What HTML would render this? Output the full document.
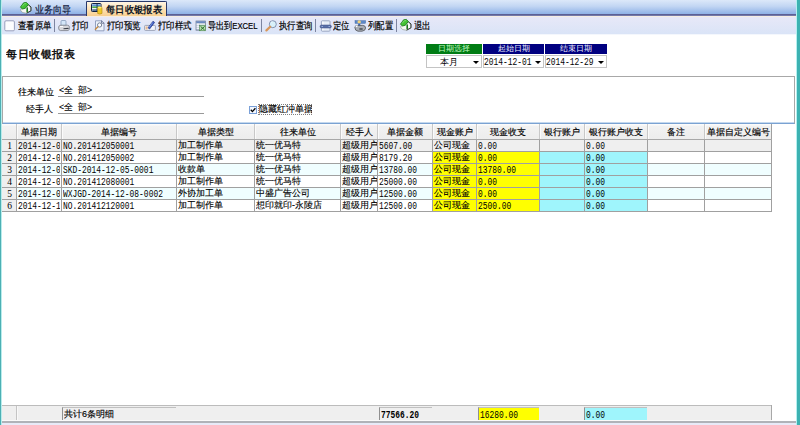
<!DOCTYPE html>
<html><head><meta charset="utf-8"><style>
*{margin:0;padding:0;box-sizing:border-box}
html,body{width:800px;height:425px;overflow:hidden;background:#fff;font-family:"Liberation Sans",sans-serif;color:#000}
.a{position:absolute}
.t{position:absolute;white-space:nowrap;overflow:hidden;line-height:11px}
.cn{font-size:9px}
.m{display:inline-block;font-family:"Liberation Mono",monospace;font-size:10.5px;line-height:11px;transform:scaleX(.755);transform-origin:0 0;position:relative;top:-2px}
.sx{display:inline-block;transform-origin:0 0}
</style></head><body>

<div class="a" style="left:0px;top:0px;width:1px;height:425px;background:#4cb0b4"></div>
<div class="a" style="left:1px;top:0px;width:1px;height:425px;background:#b8ecec"></div>
<div class="a" style="left:796px;top:0px;width:1px;height:425px;background:#b4f0f0"></div>
<div class="a" style="left:797px;top:0px;width:3px;height:425px;background:#3cb2b2"></div>
<div class="a" style="left:2px;top:0px;width:794px;height:14px;background:linear-gradient(#dce8f9,#c2d6f3 45%,#8eb1e6)"></div>
<div class="a" style="left:2px;top:14px;width:794px;height:1px;background:#5c6094"></div>
<div class="a" style="left:2px;top:15px;width:794px;height:1px;background:#7478a8"></div>
<div class="a" style="left:2px;top:16px;width:794px;height:1px;background:#f6ede2"></div>
<div class="a" style="left:2px;top:17px;width:794px;height:17px;background:linear-gradient(#e7e8f8,#dae4f7)"></div>
<div class="a" style="left:2px;top:34px;width:794px;height:1px;background:#f4f7fd"></div>
<div class="a" style="left:86px;top:1px;width:81px;height:15px;border:1px solid #27386a;border-bottom:none;border-radius:1px 2px 0 0;background:linear-gradient(#fff6e4,#fde2b6 50%,#f9cf90)"></div>
<svg class="a" style="left:18px;top:0px" width="16" height="16" viewBox="0 0 16 16">
<path d="M2.8 9 L5 8.6 L7.6 8 L10.2 5 L12.8 7.2 L12.8 10.8 L8.5 13.2 L4.8 12.6 L2.8 10.8 Z" fill="#f6f8f4" stroke="#8a948a" stroke-width="0.6"/>
<path d="M10.2 4.6 L13 7 L13 10.8 L8.6 13.2" fill="none" stroke="#303830" stroke-width="1"/>
<path d="M2.4 7.2 L5.6 2.8 L8.4 2.4 L10.4 4.4 L7.4 8.2 L4.6 9 Z" fill="#42c232" stroke="#187a18" stroke-width="0.8"/>
<path d="M4.2 6.4 L6.2 3.8 L8 3.6" fill="none" stroke="#8ae07a" stroke-width="0.8"/>
<path d="M8.4 8.2 L10 7 L10 11.8 L8.4 12.4 Z" fill="#1e7a1e"/>
</svg>
<div class="t" style="left:35px;top:4px;width:36px;font-size:9.6px;color:#14203c;-webkit-text-stroke:0.2px #14203c"><span class="sx" style="transform:scaleX(.9)">业务向导</span></div>
<svg class="a" style="left:88px;top:1px" width="16" height="16" viewBox="0 0 16 16">
<rect x="3.5" y="2.5" width="9.5" height="8" rx="0.8" fill="#e8f0f8" stroke="#102040" stroke-width="1"/>
<rect x="4.2" y="3.4" width="8" height="1.8" fill="#5c90d8"/>
<rect x="4.2" y="5.4" width="8" height="1.8" fill="#4aa848"/>
<rect x="4.2" y="7.4" width="8" height="0.8" fill="#fff"/>
<rect x="4.2" y="8.4" width="8" height="1.3" fill="#2a4a7a"/>
<rect x="8.6" y="3" width="0.9" height="7" fill="#1a3050"/>
<path d="M9.6 6.5 Q11.8 5 14 6.5 L14 12.4 Q11.8 13.8 9.6 12.4 Z" fill="#f0c828" stroke="#b08a10" stroke-width="0.6"/>
<ellipse cx="11.8" cy="6.6" rx="2" ry="0.8" fill="#fff07a"/>
</svg>
<div class="t" style="left:106px;top:4px;width:59px;font-size:9.5px;font-weight:bold;color:#0c1424"><span class="sx" style="transform:scaleX(.93)">每日收银报表</span></div>
<svg class="a" style="left:2px;top:17px" width="16" height="16" viewBox="0 0 16 16">
<rect x="2.8" y="3.8" width="9.6" height="10" rx="1.2" fill="#fdfdff" stroke="#8e96b6" stroke-width="0.9"/></svg>
<div class="t" style="left:18px;top:20px;width:34px;height:12px;font-size:9.5px;line-height:12px;color:#000;-webkit-text-stroke:0.2px #000"><span class="sx" style="transform:scaleX(0.84)">查看原单</span></div>
<div class="a" style="left:54px;top:19px;width:1px;height:13px;background:#7c84a0"></div>
<svg class="a" style="left:56px;top:17px" width="16" height="16" viewBox="0 0 16 16">
<path d="M5 8.5 L5 4.5 Q5 3.5 6 3.5 L9 3.5 Q10 3.5 10 4.5 L10 8.5 Z" fill="#d4e6f8" stroke="#7a90b0" stroke-width="0.7"/>
<path d="M2.6 10 Q3 8.2 5 8.2 L11.5 8.2 Q13.4 8.4 13.6 10.4 L13.2 12.4 Q12.8 13.6 11.2 13.6 L4.4 13.6 Q3 13.4 2.8 12 Z" fill="#d8d8dc" stroke="#6a6e78" stroke-width="0.7"/>
<path d="M4 9.6 L7 9.4" stroke="#fff" stroke-width="1"/>
<path d="M7.5 11.8 L12.6 11.4" stroke="#3a3e48" stroke-width="1.1"/>
</svg>
<div class="t" style="left:72px;top:20px;width:18px;height:12px;font-size:9.5px;line-height:12px;color:#000;-webkit-text-stroke:0.2px #000"><span class="sx" style="transform:scaleX(0.84)">打印</span></div>
<svg class="a" style="left:92px;top:17px" width="16" height="16" viewBox="0 0 16 16">
<path d="M3.5 3.8 L9.8 3.8 L12 6 L12 13.8 L3.5 13.8 Z" fill="#eef3fb" stroke="#7e8cb0" stroke-width="0.8"/>
<path d="M9.6 3.6 L9.6 6.2 L12.2 6.2" fill="none" stroke="#505c80" stroke-width="0.8"/>
<circle cx="7.6" cy="8" r="2.1" fill="#fff" stroke="#6a7690" stroke-width="0.9"/>
<path d="M6.2 9.6 L3 12.8" stroke="#c88a40" stroke-width="1.4"/>
</svg>
<div class="t" style="left:107px;top:20px;width:34px;height:12px;font-size:9.5px;line-height:12px;color:#000;-webkit-text-stroke:0.2px #000"><span class="sx" style="transform:scaleX(0.84)">打印预览</span></div>
<svg class="a" style="left:142px;top:17px" width="16" height="16" viewBox="0 0 16 16">
<rect x="2.6" y="8.4" width="10.8" height="5" rx="0.8" fill="#f2f4fa" stroke="#8a92aa" stroke-width="0.8"/>
<rect x="3.6" y="9.4" width="2" height="3" fill="#e8b890"/>
<path d="M6 10.8 L11 4.2 L12.6 5.4 L7.6 12 Z" fill="#3a5ac8" stroke="#1a2a70" stroke-width="0.6"/>
<path d="M7.2 10.2 L10.6 5.6" stroke="#a8c0f0" stroke-width="0.6"/>
</svg>
<div class="t" style="left:158px;top:20px;width:34px;height:12px;font-size:9.5px;line-height:12px;color:#000;-webkit-text-stroke:0.2px #000"><span class="sx" style="transform:scaleX(0.84)">打印样式</span></div>
<svg class="a" style="left:193px;top:17px" width="16" height="16" viewBox="0 0 16 16">
<rect x="3" y="4" width="9.4" height="9.2" fill="#b8c2d8" stroke="#6a7890" stroke-width="0.7"/>
<rect x="3.3" y="4.3" width="8.8" height="1.8" fill="#6a88c0"/>
<rect x="3.6" y="6.6" width="2.6" height="1.2" fill="#fff"/>
<rect x="3.6" y="8.6" width="2.6" height="1.2" fill="#fff"/>
<rect x="3.6" y="10.6" width="2.6" height="1.2" fill="#fff"/>
<rect x="6.6" y="6.6" width="5.4" height="1.2" fill="#e8f0e8"/>
<rect x="6.6" y="8.4" width="6" height="5.4" fill="#b8e0b0" stroke="#3a7a3a" stroke-width="0.5"/>
<path d="M7.6 9.4 L11.6 13 M11.6 9.4 L7.6 13" stroke="#2a6a2a" stroke-width="1"/>
</svg>
<div class="t" style="left:208px;top:20px;width:51px;height:12px;font-size:9.5px;line-height:12px;color:#000;-webkit-text-stroke:0.2px #000"><span class="sx" style="transform:scaleX(.81)">导出到EXCEL</span></div>
<div class="a" style="left:261px;top:19px;width:1px;height:13px;background:#7c84a0"></div>
<svg class="a" style="left:263px;top:17px" width="16" height="16" viewBox="0 0 16 16">
<circle cx="9.8" cy="7.2" r="3.5" fill="#d8f0fa" stroke="#7888a8" stroke-width="0.9"/>
<path d="M8 5.5 Q8.6 4.8 9.4 4.8" stroke="#fff" stroke-width="0.8" fill="none"/>
<path d="M7.2 9.8 L3.4 13.4" stroke="#d8965a" stroke-width="2.2" stroke-linecap="round"/>
</svg>
<div class="t" style="left:279px;top:20px;width:34px;height:12px;font-size:9.5px;line-height:12px;color:#000;-webkit-text-stroke:0.2px #000"><span class="sx" style="transform:scaleX(0.84)">执行查询</span></div>
<div class="a" style="left:315px;top:19px;width:1px;height:13px;background:#7c84a0"></div>
<svg class="a" style="left:318px;top:17px" width="16" height="16" viewBox="0 0 16 16">
<rect x="3.4" y="3.8" width="8.6" height="10.4" rx="0.8" fill="#e8eef8" stroke="#8a98b8" stroke-width="0.8"/>
<rect x="4.4" y="4.6" width="1" height="8.8" fill="#fff"/>
<rect x="2" y="8" width="11.4" height="3" rx="1.5" fill="#5a70a8" stroke="#3a4a80" stroke-width="0.5"/>
<path d="M3.5 9.5 H5 M10.5 9.5 H12" stroke="#a8c0e8" stroke-width="0.8"/>
</svg>
<div class="t" style="left:333px;top:20px;width:19px;height:12px;font-size:9.5px;line-height:12px;color:#000;-webkit-text-stroke:0.2px #000"><span class="sx" style="transform:scaleX(0.84)">定位</span></div>
<svg class="a" style="left:353px;top:17px" width="16" height="16" viewBox="0 0 16 16">
<rect x="2" y="3.6" width="10.6" height="2.8" fill="#5a88c8" stroke="#3a5a98" stroke-width="0.4"/>
<circle cx="6.2" cy="5" r="1.7" fill="#f2d27a"/>
<path d="M5.2 6.6 L7.2 6.6 L7.4 9.4 L5 9.4 Z" fill="#3a6ac0"/>
<path d="M1.8 10.4 Q2.4 7.8 5 8.4 L9.8 8.4 Q12.6 8.6 12.6 11 Q12.4 13.8 9 14.2 L5 14.2 Q2 13.8 1.8 10.4 Z" fill="#a8acb4" stroke="#50545c" stroke-width="0.8"/>
<path d="M3 10 Q3.4 8.8 4.6 9" stroke="#fff" stroke-width="1.3" fill="none"/>
<ellipse cx="8" cy="12" rx="2" ry="0.9" fill="#5a5e66"/>
</svg>
<div class="t" style="left:368px;top:20px;width:27px;height:12px;font-size:9.5px;line-height:12px;color:#000;-webkit-text-stroke:0.2px #000"><span class="sx" style="transform:scaleX(0.84)">列配置</span></div>
<div class="a" style="left:396px;top:19px;width:1px;height:13px;background:#7c84a0"></div>
<svg class="a" style="left:398px;top:17px" width="16" height="16" viewBox="0 0 16 16">
<path d="M2.8 9 L5 8.6 L7.6 8 L10.2 5 L12.8 7.2 L12.8 10.8 L8.5 13.2 L4.8 12.6 L2.8 10.8 Z" fill="#f6f8f4" stroke="#8a948a" stroke-width="0.6"/>
<path d="M10.2 4.6 L13 7 L13 10.8 L8.6 13.2" fill="none" stroke="#303830" stroke-width="1"/>
<path d="M2.4 7.2 L5.6 2.8 L8.4 2.4 L10.4 4.4 L7.4 8.2 L4.6 9 Z" fill="#42c232" stroke="#187a18" stroke-width="0.8"/>
<path d="M4.2 6.4 L6.2 3.8 L8 3.6" fill="none" stroke="#8ae07a" stroke-width="0.8"/>
<path d="M8.4 8.2 L10 7 L10 11.8 L8.4 12.4 Z" fill="#1e7a1e"/>
</svg>
<div class="t" style="left:414px;top:20px;width:19px;height:12px;font-size:9.5px;line-height:12px;color:#000;-webkit-text-stroke:0.2px #000"><span class="sx" style="transform:scaleX(0.84)">退出</span></div>
<div class="t" style="left:6px;top:47px;width:72px;font-size:11px;line-height:14px;letter-spacing:0.5px;-webkit-text-stroke:0.35px #000;color:#000">每日收银报表</div>
<div class="a" style="left:426px;top:44px;width:56px;height:10px;background:#007c14;color:#c4ffc4;font-size:8px;line-height:10px;text-align:center;white-space:nowrap">日期选择</div>
<div class="a" style="left:483px;top:44px;width:61px;height:10px;background:#000080;color:#f0f0ff;font-size:8px;line-height:10px;text-align:center;white-space:nowrap">起始日期</div>
<div class="a" style="left:545px;top:44px;width:62px;height:10px;background:#000080;color:#f0f0ff;font-size:8px;line-height:10px;text-align:center;white-space:nowrap">结束日期</div>
<div class="a" style="left:426px;top:55px;width:56px;height:13px;border:1px solid #c4c4c4;background:#fff"><div class="t" style="left:13px;top:1px;width:30px;font-size:9px">本月</div><div class="a" style="left:46px;top:5px;width:0;height:0;border-left:3px solid transparent;border-right:3px solid transparent;border-top:3px solid #000"></div></div>
<div class="a" style="left:483px;top:55px;width:61px;height:13px;border:1px solid #c4c4c4;background:#fff"><div class="t" style="left:0px;top:1px;height:11px"><span class="m" style="top:-3px">2014-12-01</span></div><div class="a" style="left:51px;top:5px;width:0;height:0;border-left:3px solid transparent;border-right:3px solid transparent;border-top:3px solid #000"></div></div>
<div class="a" style="left:545px;top:55px;width:62px;height:13px;border:1px solid #c4c4c4;background:#fff"><div class="t" style="left:0px;top:1px;height:11px"><span class="m" style="top:-3px">2014-12-29</span></div><div class="a" style="left:52px;top:5px;width:0;height:0;border-left:3px solid transparent;border-right:3px solid transparent;border-top:3px solid #000"></div></div>
<div class="a" style="left:2px;top:76px;width:793px;height:48px;border:1px solid #a8a8a8;border-bottom:1px solid #7aa2d2"></div>
<div class="a" style="left:3px;top:122px;width:791px;height:1px;background:#c4d8ee"></div>
<div class="t" style="left:18px;top:87px;width:37px;font-size:8.8px;-webkit-text-stroke:0.15px #000">往来单位</div>
<div class="t" style="left:59px;top:85px;width:36px;font-size:8.8px;-webkit-text-stroke:0.1px #000">&lt;全&nbsp;&nbsp;部&gt;</div>
<div class="a" style="left:58px;top:96px;width:146px;height:1px;background:#999"></div>
<div class="t" style="left:26px;top:104px;width:28px;font-size:8.8px;-webkit-text-stroke:0.15px #000">经手人</div>
<div class="t" style="left:59px;top:102px;width:36px;font-size:8.8px;-webkit-text-stroke:0.1px #000">&lt;全&nbsp;&nbsp;部&gt;</div>
<div class="a" style="left:58px;top:113px;width:146px;height:1px;background:#999"></div>
<div class="a" style="left:249px;top:106px;width:8px;height:8px;border:1px solid #7aa0d8;background:#f4f8ff"></div>
<svg class="a" style="left:249px;top:106px" width="8" height="8" viewBox="0 0 8 8"><path d="M1.8 3.8 L3.4 5.6 L6.4 2.2" fill="none" stroke="#000" stroke-width="1.3"/></svg>
<div class="a" style="left:258px;top:104px;width:54px;height:11px;border:1px dotted #808080"></div>
<div class="t" style="left:259px;top:104px;width:53px;font-size:8.8px;-webkit-text-stroke:0.15px #000">隐藏红冲单据</div>
<div class="a" style="left:2px;top:124px;width:769px;height:15px;background:linear-gradient(#fbfbfb 0,#fbfbfb 1px,#f2f2f2 2px,#ededed)"></div>
<div class="a" style="left:16px;top:124px;width:1px;height:15px;background:#c8c8c8"></div>
<div class="a" style="left:17px;top:124px;width:1px;height:15px;background:#fbfbfb"></div>
<div class="a" style="left:61px;top:124px;width:1px;height:15px;background:#c8c8c8"></div>
<div class="a" style="left:62px;top:124px;width:1px;height:15px;background:#fbfbfb"></div>
<div class="a" style="left:176px;top:124px;width:1px;height:15px;background:#c8c8c8"></div>
<div class="a" style="left:177px;top:124px;width:1px;height:15px;background:#fbfbfb"></div>
<div class="a" style="left:254px;top:124px;width:1px;height:15px;background:#c8c8c8"></div>
<div class="a" style="left:255px;top:124px;width:1px;height:15px;background:#fbfbfb"></div>
<div class="a" style="left:340px;top:124px;width:1px;height:15px;background:#c8c8c8"></div>
<div class="a" style="left:341px;top:124px;width:1px;height:15px;background:#fbfbfb"></div>
<div class="a" style="left:377px;top:124px;width:1px;height:15px;background:#c8c8c8"></div>
<div class="a" style="left:378px;top:124px;width:1px;height:15px;background:#fbfbfb"></div>
<div class="a" style="left:432px;top:124px;width:1px;height:15px;background:#c8c8c8"></div>
<div class="a" style="left:433px;top:124px;width:1px;height:15px;background:#fbfbfb"></div>
<div class="a" style="left:476px;top:124px;width:1px;height:15px;background:#c8c8c8"></div>
<div class="a" style="left:477px;top:124px;width:1px;height:15px;background:#fbfbfb"></div>
<div class="a" style="left:539px;top:124px;width:1px;height:15px;background:#c8c8c8"></div>
<div class="a" style="left:540px;top:124px;width:1px;height:15px;background:#fbfbfb"></div>
<div class="a" style="left:584px;top:124px;width:1px;height:15px;background:#c8c8c8"></div>
<div class="a" style="left:585px;top:124px;width:1px;height:15px;background:#fbfbfb"></div>
<div class="a" style="left:647px;top:124px;width:1px;height:15px;background:#c8c8c8"></div>
<div class="a" style="left:648px;top:124px;width:1px;height:15px;background:#fbfbfb"></div>
<div class="a" style="left:704px;top:124px;width:1px;height:15px;background:#c8c8c8"></div>
<div class="a" style="left:705px;top:124px;width:1px;height:15px;background:#fbfbfb"></div>
<div class="a" style="left:771px;top:124px;width:1px;height:88px;background:#a0a0a0"></div>
<div class="t" style="left:17px;top:127px;width:44px;text-align:center;font-size:9px;color:#000;-webkit-text-stroke:0.15px #000">单据日期</div>
<div class="t" style="left:62px;top:127px;width:114px;text-align:center;font-size:9px;color:#000;-webkit-text-stroke:0.15px #000">单据编号</div>
<div class="t" style="left:177px;top:127px;width:77px;text-align:center;font-size:9px;color:#000;-webkit-text-stroke:0.15px #000">单据类型</div>
<div class="t" style="left:255px;top:127px;width:85px;text-align:center;font-size:9px;color:#000;-webkit-text-stroke:0.15px #000">往来单位</div>
<div class="t" style="left:341px;top:127px;width:36px;text-align:center;font-size:9px;color:#000;-webkit-text-stroke:0.15px #000">经手人</div>
<div class="t" style="left:378px;top:127px;width:54px;text-align:center;font-size:9px;color:#000;-webkit-text-stroke:0.15px #000">单据金额</div>
<div class="t" style="left:433px;top:127px;width:43px;text-align:center;font-size:9px;color:#000;-webkit-text-stroke:0.15px #000">现金账户</div>
<div class="t" style="left:477px;top:127px;width:62px;text-align:center;font-size:9px;color:#000;-webkit-text-stroke:0.15px #000">现金收支</div>
<div class="t" style="left:540px;top:127px;width:44px;text-align:center;font-size:9px;color:#000;-webkit-text-stroke:0.15px #000">银行账户</div>
<div class="t" style="left:585px;top:127px;width:62px;text-align:center;font-size:9px;color:#000;-webkit-text-stroke:0.15px #000">银行账户收支</div>
<div class="t" style="left:648px;top:127px;width:56px;text-align:center;font-size:9px;color:#000;-webkit-text-stroke:0.15px #000">备注</div>
<div class="t" style="left:705px;top:127px;width:66px;text-align:center;font-size:9px;color:#000;-webkit-text-stroke:0.15px #000">单据自定义编号</div>
<div class="a" style="left:2px;top:139px;width:770px;height:1px;background:#a8a8a8"></div>
<div class="a" style="left:2px;top:140px;width:14px;height:11px;background:#efefef"></div>
<div class="a" style="left:17px;top:140px;width:44px;height:11px;background:#efefef"></div>
<div class="a" style="left:62px;top:140px;width:114px;height:11px;background:#efefef"></div>
<div class="a" style="left:177px;top:140px;width:77px;height:11px;background:#efefef"></div>
<div class="a" style="left:255px;top:140px;width:85px;height:11px;background:#efefef"></div>
<div class="a" style="left:341px;top:140px;width:36px;height:11px;background:#efefef"></div>
<div class="a" style="left:378px;top:140px;width:54px;height:11px;background:#efefef"></div>
<div class="a" style="left:433px;top:140px;width:43px;height:11px;background:#efefef"></div>
<div class="a" style="left:477px;top:140px;width:62px;height:11px;background:#efefef"></div>
<div class="a" style="left:540px;top:140px;width:44px;height:11px;background:#efefef"></div>
<div class="a" style="left:585px;top:140px;width:62px;height:11px;background:#efefef"></div>
<div class="a" style="left:648px;top:140px;width:56px;height:11px;background:#efefef"></div>
<div class="a" style="left:705px;top:140px;width:66px;height:11px;background:#efefef"></div>
<div class="a" style="left:2px;top:151px;width:770px;height:1px;background:#a0a0a0"></div>
<div class="a" style="left:2px;top:152px;width:14px;height:11px;background:#efefef"></div>
<div class="a" style="left:17px;top:152px;width:44px;height:11px;background:#fff"></div>
<div class="a" style="left:62px;top:152px;width:114px;height:11px;background:#fff"></div>
<div class="a" style="left:177px;top:152px;width:77px;height:11px;background:#fff"></div>
<div class="a" style="left:255px;top:152px;width:85px;height:11px;background:#fff"></div>
<div class="a" style="left:341px;top:152px;width:36px;height:11px;background:#fff"></div>
<div class="a" style="left:378px;top:152px;width:54px;height:11px;background:#fff"></div>
<div class="a" style="left:433px;top:152px;width:43px;height:11px;background:#ffff00"></div>
<div class="a" style="left:477px;top:152px;width:62px;height:11px;background:#ffff00"></div>
<div class="a" style="left:540px;top:152px;width:44px;height:11px;background:#9ff5fc"></div>
<div class="a" style="left:585px;top:152px;width:62px;height:11px;background:#9ff5fc"></div>
<div class="a" style="left:648px;top:152px;width:56px;height:11px;background:#fff"></div>
<div class="a" style="left:705px;top:152px;width:66px;height:11px;background:#fff"></div>
<div class="a" style="left:2px;top:163px;width:770px;height:1px;background:#a0a0a0"></div>
<div class="a" style="left:2px;top:164px;width:14px;height:11px;background:#efefef"></div>
<div class="a" style="left:17px;top:164px;width:44px;height:11px;background:#f0feff"></div>
<div class="a" style="left:62px;top:164px;width:114px;height:11px;background:#f0feff"></div>
<div class="a" style="left:177px;top:164px;width:77px;height:11px;background:#f0feff"></div>
<div class="a" style="left:255px;top:164px;width:85px;height:11px;background:#f0feff"></div>
<div class="a" style="left:341px;top:164px;width:36px;height:11px;background:#f0feff"></div>
<div class="a" style="left:378px;top:164px;width:54px;height:11px;background:#f0feff"></div>
<div class="a" style="left:433px;top:164px;width:43px;height:11px;background:#ffff00"></div>
<div class="a" style="left:477px;top:164px;width:62px;height:11px;background:#ffff00"></div>
<div class="a" style="left:540px;top:164px;width:44px;height:11px;background:#9ff5fc"></div>
<div class="a" style="left:585px;top:164px;width:62px;height:11px;background:#9ff5fc"></div>
<div class="a" style="left:648px;top:164px;width:56px;height:11px;background:#f0feff"></div>
<div class="a" style="left:705px;top:164px;width:66px;height:11px;background:#f0feff"></div>
<div class="a" style="left:2px;top:175px;width:770px;height:1px;background:#a0a0a0"></div>
<div class="a" style="left:2px;top:176px;width:14px;height:11px;background:#efefef"></div>
<div class="a" style="left:17px;top:176px;width:44px;height:11px;background:#fff"></div>
<div class="a" style="left:62px;top:176px;width:114px;height:11px;background:#fff"></div>
<div class="a" style="left:177px;top:176px;width:77px;height:11px;background:#fff"></div>
<div class="a" style="left:255px;top:176px;width:85px;height:11px;background:#fff"></div>
<div class="a" style="left:341px;top:176px;width:36px;height:11px;background:#fff"></div>
<div class="a" style="left:378px;top:176px;width:54px;height:11px;background:#fff"></div>
<div class="a" style="left:433px;top:176px;width:43px;height:11px;background:#ffff00"></div>
<div class="a" style="left:477px;top:176px;width:62px;height:11px;background:#ffff00"></div>
<div class="a" style="left:540px;top:176px;width:44px;height:11px;background:#9ff5fc"></div>
<div class="a" style="left:585px;top:176px;width:62px;height:11px;background:#9ff5fc"></div>
<div class="a" style="left:648px;top:176px;width:56px;height:11px;background:#fff"></div>
<div class="a" style="left:705px;top:176px;width:66px;height:11px;background:#fff"></div>
<div class="a" style="left:2px;top:187px;width:770px;height:1px;background:#a0a0a0"></div>
<div class="a" style="left:2px;top:188px;width:14px;height:11px;background:#efefef"></div>
<div class="a" style="left:17px;top:188px;width:44px;height:11px;background:#f0feff"></div>
<div class="a" style="left:62px;top:188px;width:114px;height:11px;background:#f0feff"></div>
<div class="a" style="left:177px;top:188px;width:77px;height:11px;background:#f0feff"></div>
<div class="a" style="left:255px;top:188px;width:85px;height:11px;background:#f0feff"></div>
<div class="a" style="left:341px;top:188px;width:36px;height:11px;background:#f0feff"></div>
<div class="a" style="left:378px;top:188px;width:54px;height:11px;background:#f0feff"></div>
<div class="a" style="left:433px;top:188px;width:43px;height:11px;background:#ffff00"></div>
<div class="a" style="left:477px;top:188px;width:62px;height:11px;background:#ffff00"></div>
<div class="a" style="left:540px;top:188px;width:44px;height:11px;background:#9ff5fc"></div>
<div class="a" style="left:585px;top:188px;width:62px;height:11px;background:#9ff5fc"></div>
<div class="a" style="left:648px;top:188px;width:56px;height:11px;background:#f0feff"></div>
<div class="a" style="left:705px;top:188px;width:66px;height:11px;background:#f0feff"></div>
<div class="a" style="left:2px;top:199px;width:770px;height:1px;background:#a0a0a0"></div>
<div class="a" style="left:2px;top:200px;width:14px;height:11px;background:#efefef"></div>
<div class="a" style="left:17px;top:200px;width:44px;height:11px;background:#fff"></div>
<div class="a" style="left:62px;top:200px;width:114px;height:11px;background:#fff"></div>
<div class="a" style="left:177px;top:200px;width:77px;height:11px;background:#fff"></div>
<div class="a" style="left:255px;top:200px;width:85px;height:11px;background:#fff"></div>
<div class="a" style="left:341px;top:200px;width:36px;height:11px;background:#fff"></div>
<div class="a" style="left:378px;top:200px;width:54px;height:11px;background:#fff"></div>
<div class="a" style="left:433px;top:200px;width:43px;height:11px;background:#ffff00"></div>
<div class="a" style="left:477px;top:200px;width:62px;height:11px;background:#ffff00"></div>
<div class="a" style="left:540px;top:200px;width:44px;height:11px;background:#9ff5fc"></div>
<div class="a" style="left:585px;top:200px;width:62px;height:11px;background:#9ff5fc"></div>
<div class="a" style="left:648px;top:200px;width:56px;height:11px;background:#fff"></div>
<div class="a" style="left:705px;top:200px;width:66px;height:11px;background:#fff"></div>
<div class="a" style="left:2px;top:211px;width:770px;height:1px;background:#a0a0a0"></div>
<div class="a" style="left:16px;top:140px;width:1px;height:72px;background:#a0a0a0"></div>
<div class="a" style="left:61px;top:140px;width:1px;height:72px;background:#a0a0a0"></div>
<div class="a" style="left:176px;top:140px;width:1px;height:72px;background:#a0a0a0"></div>
<div class="a" style="left:254px;top:140px;width:1px;height:72px;background:#a0a0a0"></div>
<div class="a" style="left:340px;top:140px;width:1px;height:72px;background:#a0a0a0"></div>
<div class="a" style="left:377px;top:140px;width:1px;height:72px;background:#a0a0a0"></div>
<div class="a" style="left:432px;top:140px;width:1px;height:72px;background:#a0a0a0"></div>
<div class="a" style="left:476px;top:140px;width:1px;height:72px;background:#a0a0a0"></div>
<div class="a" style="left:539px;top:140px;width:1px;height:72px;background:#a0a0a0"></div>
<div class="a" style="left:584px;top:140px;width:1px;height:72px;background:#a0a0a0"></div>
<div class="a" style="left:647px;top:140px;width:1px;height:72px;background:#a0a0a0"></div>
<div class="a" style="left:704px;top:140px;width:1px;height:72px;background:#a0a0a0"></div>
<div class="t" style="left:3px;top:141px;width:13px;text-align:center;font-family:'Liberation Serif',serif;font-size:9.5px">1</div>
<div class="t" style="left:18px;top:140px;width:42px;height:11px"><span class="m">2014-12-0</span></div>
<div class="t" style="left:63px;top:140px;width:112px;height:11px"><span class="m">NO.201412050001</span></div>
<div class="t" style="left:178px;top:140px;width:76px;font-size:8.8px;-webkit-text-stroke:0.12px #000">加工制作单</div>
<div class="t" style="left:256px;top:140px;width:84px;font-size:8.8px;-webkit-text-stroke:0.12px #000">统一优马特</div>
<div class="t" style="left:342px;top:140px;width:35px;font-size:8.8px;-webkit-text-stroke:0.12px #000">超级用户</div>
<div class="t" style="left:379px;top:140px;width:52px;height:11px"><span class="m">5607.00</span></div>
<div class="t" style="left:434px;top:140px;width:42px;font-size:8.8px;-webkit-text-stroke:0.12px #000">公司现金</div>
<div class="t" style="left:478px;top:140px;width:60px;height:11px"><span class="m">0.00</span></div>
<div class="t" style="left:586px;top:140px;width:60px;height:11px"><span class="m">0.00</span></div>
<div class="t" style="left:3px;top:153px;width:13px;text-align:center;font-family:'Liberation Serif',serif;font-size:9.5px">2</div>
<div class="t" style="left:18px;top:152px;width:42px;height:11px"><span class="m">2014-12-0</span></div>
<div class="t" style="left:63px;top:152px;width:112px;height:11px"><span class="m">NO.201412050002</span></div>
<div class="t" style="left:178px;top:152px;width:76px;font-size:8.8px;-webkit-text-stroke:0.12px #000">加工制作单</div>
<div class="t" style="left:256px;top:152px;width:84px;font-size:8.8px;-webkit-text-stroke:0.12px #000">统一优马特</div>
<div class="t" style="left:342px;top:152px;width:35px;font-size:8.8px;-webkit-text-stroke:0.12px #000">超级用户</div>
<div class="t" style="left:379px;top:152px;width:52px;height:11px"><span class="m">8179.20</span></div>
<div class="t" style="left:434px;top:152px;width:42px;font-size:8.8px;-webkit-text-stroke:0.12px #000">公司现金</div>
<div class="t" style="left:478px;top:152px;width:60px;height:11px"><span class="m">0.00</span></div>
<div class="t" style="left:586px;top:152px;width:60px;height:11px"><span class="m">0.00</span></div>
<div class="t" style="left:3px;top:165px;width:13px;text-align:center;font-family:'Liberation Serif',serif;font-size:9.5px">3</div>
<div class="t" style="left:18px;top:164px;width:42px;height:11px"><span class="m">2014-12-0</span></div>
<div class="t" style="left:63px;top:164px;width:112px;height:11px"><span class="m">SKD-2014-12-05-0001</span></div>
<div class="t" style="left:178px;top:164px;width:76px;font-size:8.8px;-webkit-text-stroke:0.12px #000">收款单</div>
<div class="t" style="left:256px;top:164px;width:84px;font-size:8.8px;-webkit-text-stroke:0.12px #000">统一优马特</div>
<div class="t" style="left:342px;top:164px;width:35px;font-size:8.8px;-webkit-text-stroke:0.12px #000">超级用户</div>
<div class="t" style="left:379px;top:164px;width:52px;height:11px"><span class="m">13780.00</span></div>
<div class="t" style="left:434px;top:164px;width:42px;font-size:8.8px;-webkit-text-stroke:0.12px #000">公司现金</div>
<div class="t" style="left:478px;top:164px;width:60px;height:11px"><span class="m">13780.00</span></div>
<div class="t" style="left:586px;top:164px;width:60px;height:11px"><span class="m">0.00</span></div>
<div class="t" style="left:3px;top:177px;width:13px;text-align:center;font-family:'Liberation Serif',serif;font-size:9.5px">4</div>
<div class="t" style="left:18px;top:176px;width:42px;height:11px"><span class="m">2014-12-0</span></div>
<div class="t" style="left:63px;top:176px;width:112px;height:11px"><span class="m">NO.201412080001</span></div>
<div class="t" style="left:178px;top:176px;width:76px;font-size:8.8px;-webkit-text-stroke:0.12px #000">加工制作单</div>
<div class="t" style="left:256px;top:176px;width:84px;font-size:8.8px;-webkit-text-stroke:0.12px #000">统一优马特</div>
<div class="t" style="left:342px;top:176px;width:35px;font-size:8.8px;-webkit-text-stroke:0.12px #000">超级用户</div>
<div class="t" style="left:379px;top:176px;width:52px;height:11px"><span class="m">25000.00</span></div>
<div class="t" style="left:434px;top:176px;width:42px;font-size:8.8px;-webkit-text-stroke:0.12px #000">公司现金</div>
<div class="t" style="left:478px;top:176px;width:60px;height:11px"><span class="m">0.00</span></div>
<div class="t" style="left:586px;top:176px;width:60px;height:11px"><span class="m">0.00</span></div>
<div class="t" style="left:3px;top:189px;width:13px;text-align:center;font-family:'Liberation Serif',serif;font-size:9.5px">5</div>
<div class="t" style="left:18px;top:188px;width:42px;height:11px"><span class="m">2014-12-0</span></div>
<div class="t" style="left:63px;top:188px;width:112px;height:11px"><span class="m">WXJGD-2014-12-08-0002</span></div>
<div class="t" style="left:178px;top:188px;width:76px;font-size:8.8px;-webkit-text-stroke:0.12px #000">外协加工单</div>
<div class="t" style="left:256px;top:188px;width:84px;font-size:8.8px;-webkit-text-stroke:0.12px #000">中盛广告公司</div>
<div class="t" style="left:342px;top:188px;width:35px;font-size:8.8px;-webkit-text-stroke:0.12px #000">超级用户</div>
<div class="t" style="left:379px;top:188px;width:52px;height:11px"><span class="m">12500.00</span></div>
<div class="t" style="left:434px;top:188px;width:42px;font-size:8.8px;-webkit-text-stroke:0.12px #000">公司现金</div>
<div class="t" style="left:478px;top:188px;width:60px;height:11px"><span class="m">0.00</span></div>
<div class="t" style="left:586px;top:188px;width:60px;height:11px"><span class="m">0.00</span></div>
<div class="t" style="left:3px;top:201px;width:13px;text-align:center;font-family:'Liberation Serif',serif;font-size:9.5px">6</div>
<div class="t" style="left:18px;top:200px;width:42px;height:11px"><span class="m">2014-12-1</span></div>
<div class="t" style="left:63px;top:200px;width:112px;height:11px"><span class="m">NO.201412120001</span></div>
<div class="t" style="left:178px;top:200px;width:76px;font-size:8.8px;-webkit-text-stroke:0.12px #000">加工制作单</div>
<div class="t" style="left:256px;top:200px;width:84px;font-size:8.8px;-webkit-text-stroke:0.12px #000">想印就印-永陵店</div>
<div class="t" style="left:342px;top:200px;width:35px;font-size:8.8px;-webkit-text-stroke:0.12px #000">超级用户</div>
<div class="t" style="left:379px;top:200px;width:52px;height:11px"><span class="m">12500.00</span></div>
<div class="t" style="left:434px;top:200px;width:42px;font-size:8.8px;-webkit-text-stroke:0.12px #000">公司现金</div>
<div class="t" style="left:478px;top:200px;width:60px;height:11px"><span class="m">2500.00</span></div>
<div class="t" style="left:586px;top:200px;width:60px;height:11px"><span class="m">0.00</span></div>
<div class="a" style="left:2px;top:405px;width:770px;height:1px;background:#bcbcbc"></div>
<div class="a" style="left:2px;top:406px;width:770px;height:15px;background:#efefef"></div>
<div class="a" style="left:771px;top:405px;width:1px;height:16px;background:#a8a8a8"></div>
<div class="a" style="left:16px;top:406px;width:1px;height:15px;background:#c4c4c4"></div>
<div class="a" style="left:17px;top:406px;width:1px;height:15px;background:#f8f8f8"></div>
<div class="a" style="left:2px;top:420px;width:770px;height:1px;background:#fafafa"></div>
<div class="a" style="left:2px;top:421px;width:794px;height:2px;background:#b0b2b8"></div>
<div class="a" style="left:2px;top:423px;width:794px;height:2px;background:#e8eaf8"></div>
<div class="a" style="left:62px;top:407px;width:114px;height:13px;background:#efefef;border-left:1px solid #909090;border-top:1px solid #c0c0c0"><div class="t" style="left:1px;top:1px;width:111px;font-size:9px;-webkit-text-stroke:0.15px #000">共计6条明细</div></div>
<div class="a" style="left:379px;top:407px;width:53px;height:13px;background:#efefef;border-left:1px solid #909090;border-top:1px solid #c0c0c0"><div class="t" style="left:1px;top:1px;height:11px"><span class="m" style="font-weight:bold">77566.20</span></div></div>
<div class="a" style="left:478px;top:407px;width:61px;height:13px;background:#ffff00;border-left:1px solid #909090;border-top:1px solid #c0c0c0"><div class="t" style="left:1px;top:1px;height:11px"><span class="m" style="font-weight:normal">16280.00</span></div></div>
<div class="a" style="left:584px;top:407px;width:63px;height:13px;background:#9ff5fc;border-left:1px solid #909090;border-top:1px solid #c0c0c0"><div class="t" style="left:1px;top:1px;height:11px"><span class="m" style="font-weight:normal">0.00</span></div></div>
</body></html>
